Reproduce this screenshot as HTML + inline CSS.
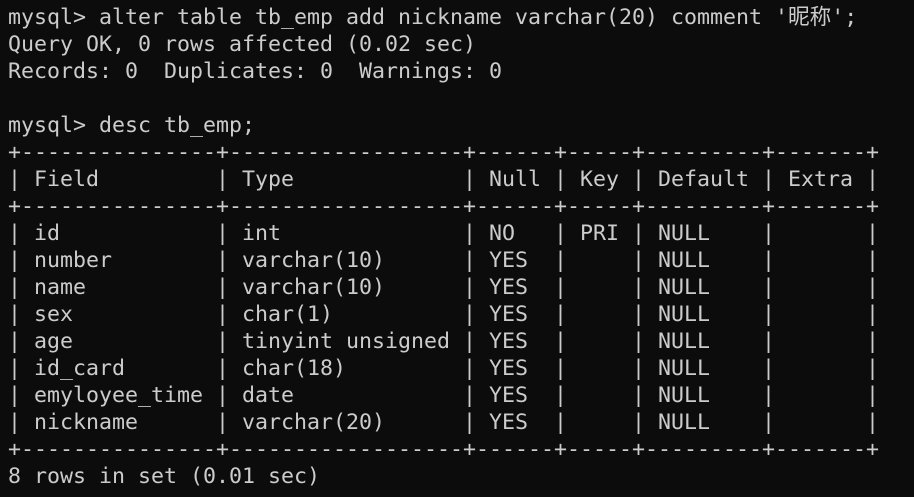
<!DOCTYPE html>
<html><head><meta charset="utf-8"><style>
html,body{margin:0;padding:0;background:#0c0c0c;width:914px;height:497px;overflow:hidden}
pre{margin:0;padding:4px 0 0 8px;color:#cccccc;font-family:"DejaVu Sans Mono","Noto Sans CJK SC",monospace;font-size:21.6px;line-height:27px;white-space:pre}
</style></head><body><pre>mysql&gt; alter table tb_emp add nickname varchar(20) comment '昵称';
Query OK, 0 rows affected (0.02 sec)
Records: 0  Duplicates: 0  Warnings: 0

mysql&gt; desc tb_emp;
+---------------+------------------+------+-----+---------+-------+
| Field         | Type             | Null | Key | Default | Extra |
+---------------+------------------+------+-----+---------+-------+
| id            | int              | NO   | PRI | NULL    |       |
| number        | varchar(10)      | YES  |     | NULL    |       |
| name          | varchar(10)      | YES  |     | NULL    |       |
| sex           | char(1)          | YES  |     | NULL    |       |
| age           | tinyint unsigned | YES  |     | NULL    |       |
| id_card       | char(18)         | YES  |     | NULL    |       |
| emyloyee_time | date             | YES  |     | NULL    |       |
| nickname      | varchar(20)      | YES  |     | NULL    |       |
+---------------+------------------+------+-----+---------+-------+
8 rows in set (0.01 sec)</pre></body></html>
